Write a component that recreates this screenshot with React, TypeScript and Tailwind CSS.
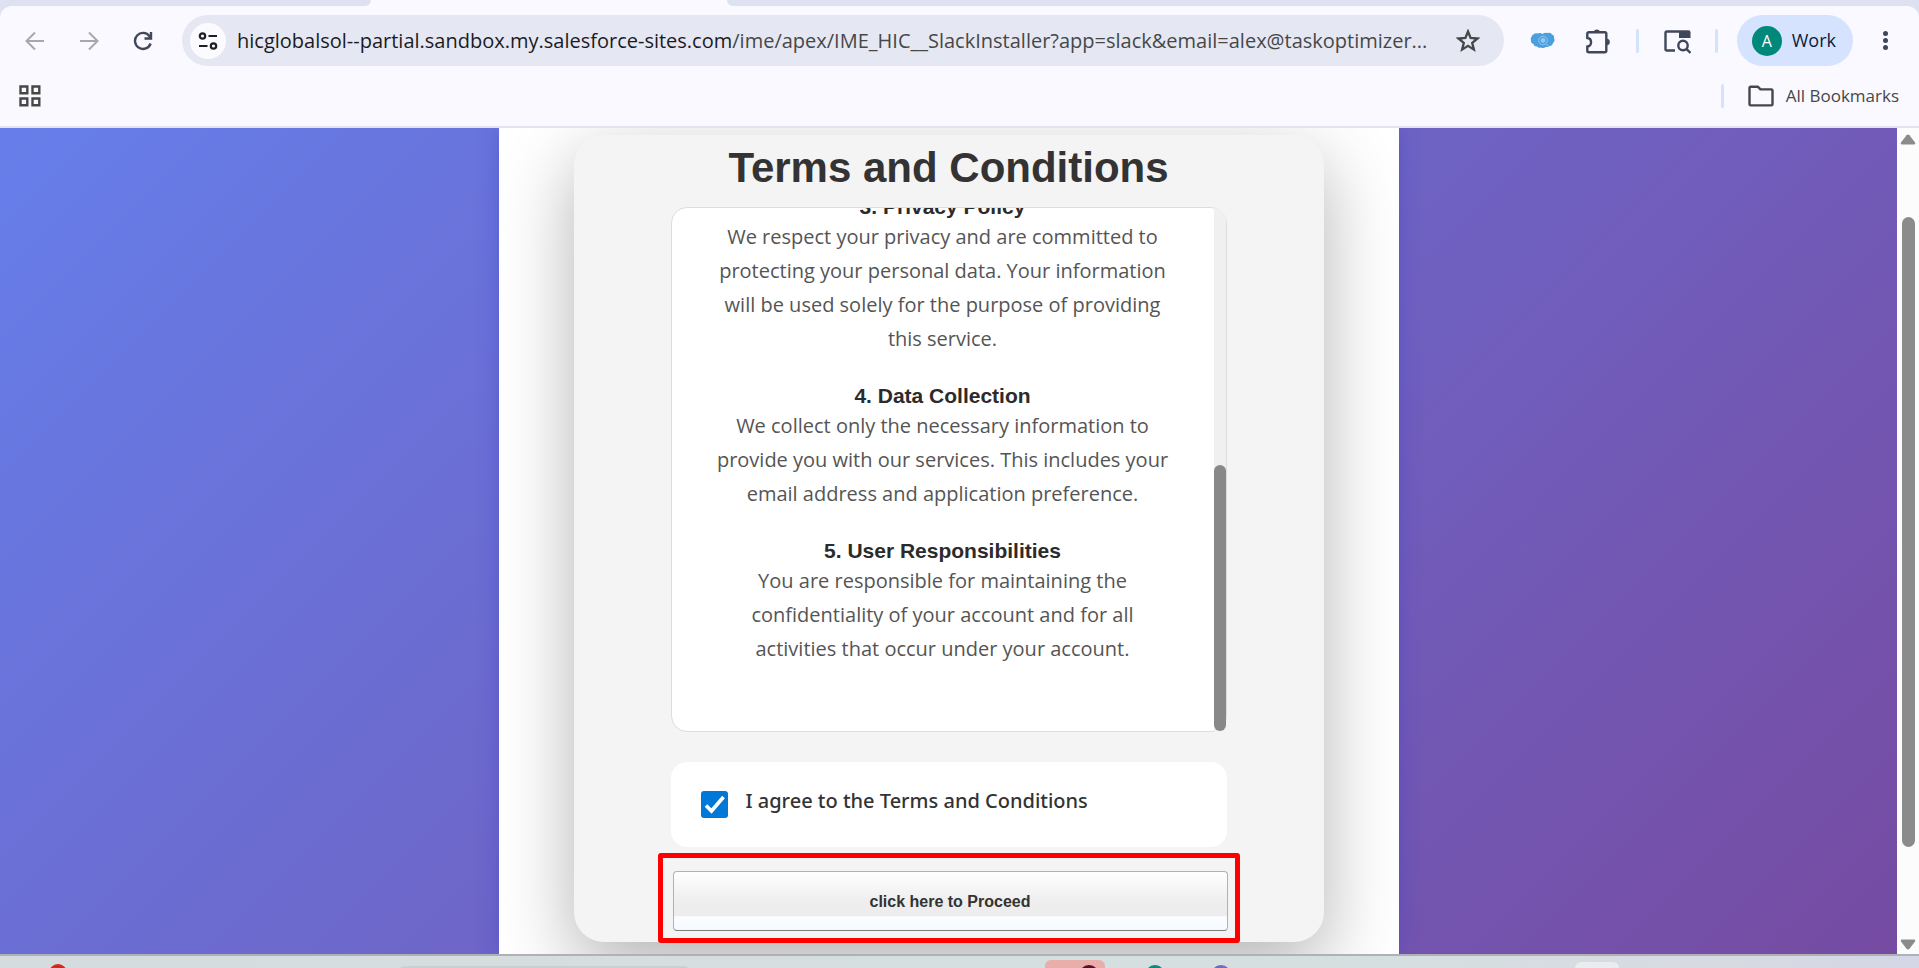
import React from "react";

const sections = [
  {
    title: "3. Privacy Policy",
    body: "We respect your privacy and are committed to protecting your personal data. Your information will be used solely for the purpose of providing this service.",
  },
  {
    title: "4. Data Collection",
    body: "We collect only the necessary information to provide you with our services. This includes your email address and application preference.",
  },
  {
    title: "5. User Responsibilities",
    body: "You are responsible for maintaining the confidentiality of your account and for all activities that occur under your account.",
  },
];

const stroke = { fill: "none", stroke: "currentColor", strokeWidth: 2 } as const;

function BackIcon() {
  return (
    <svg width="20" height="20" viewBox="0 0 20 20" {...stroke}>
      <path d="M19 10H2M10 1.5 1.5 10 10 18.5" />
    </svg>
  );
}

function ForwardIcon() {
  return (
    <svg width="20" height="20" viewBox="0 0 20 20" {...stroke}>
      <path d="M1 10h17M10 1.5l8.500 8.500-8.500 8.500" />
    </svg>
  );
}

function ReloadIcon() {
  return (
    <svg width="20" height="20" viewBox="0 0 20 20" {...stroke} strokeWidth={2.4}>
      <path d="M17.600 12.500A8 8 0 1 1 16.500 5.200L18 7" />
      <path d="M18 1v6.500h-6.500" />
    </svg>
  );
}

function TuneIcon() {
  return (
    <svg width="20" height="20" viewBox="0 0 20 20" {...stroke} strokeWidth={2.200}>
      <circle cx="4.500" cy="5" r="2.700" />
      <path d="M10.500 5H19M1 15h8.500" />
      <circle cx="15.500" cy="15" r="2.700" />
    </svg>
  );
}

function StarIcon() {
  return (
    <svg width="24" height="24" viewBox="0 0 24 24" {...stroke} strokeWidth={2.300}>
      <path d="M12 2.500l2.600 6.500 6.900.5-5.300 4.400 1.700 6.700-5.900-3.700L6.100 20.600l1.700-6.700-5.300-4.400L9.400 9z" />
    </svg>
  );
}

function CloudIcon() {
  return (
    <svg width="26" height="20" viewBox="0 0 26 20">
      <path
        fill="#4a9fdf"
        d="M3.500 3.500Q5 1.500 8 2.500 10 1.200 12.500 3 15 1 17.500 2 21 .8 22 3.500q2.500.8 2 3.500 1.500 3-1 5-.5 3-3.500 3-1.500 1.500-3.500.8-2.500 2.200-5 .7-2.500.8-4-1-3 .3-3.500-2.500Q.5 12 1 9q-1-2 .5-3 0-2 2-2.500z"
      />
      <circle cx="13" cy="9.500" r="4.300" fill="none" stroke="#8fc9f2" />
      <circle cx="13" cy="9.500" r="2.400" fill="#8fc9f2" />
      <path d="M16 12.500l2.500 2.500" stroke="#8fc9f2" />
    </svg>
  );
}

function PuzzleIcon() {
  return (
    <svg width="28" height="28" viewBox="0 0 28 28" {...stroke} strokeWidth={2.400}>
      <path d="M4.800 5.200h16a1.500 1.500 0 0 1 1.500 1.500v17a1.500 1.500 0 0 1-1.500 1.500h-16a1.500 1.500 0 0 1-1.500-1.500V19.500c5-.5 5-8 0-8.500V6.700A1.500 1.500 0 0 1 4.800 5.200z" />
      <path fill="currentColor" stroke="none" d="M9.700 5a3.300 3.300 0 0 1 6.400 0zM22.500 11.700a3.300 3.300 0 0 1 0 6.600z" />
    </svg>
  );
}

function TabSearchIcon() {
  return (
    <svg width="28" height="28" viewBox="0 0 28 28" {...stroke} strokeWidth={2.400}>
      <path d="M12 23.500H4a1.500 1.500 0 0 1-1.500-1.500V6A1.500 1.500 0 0 1 4 4.500h12" />
      <path fill="currentColor" stroke="none" d="M16 3.300h9.500a2 2 0 0 1 2 2V11H16z" />
      <circle cx="20" cy="18.500" r="4.700" />
      <path d="M23.300 21.800l4.200 4.200" />
    </svg>
  );
}

function FolderIcon() {
  return (
    <svg width="26" height="22" viewBox="0 0 26 22" {...stroke} strokeWidth={2.400} strokeLinejoin="round">
      <path d="M2.500 1.800h7.500l2.500 2.600h11A1.200 1.200 0 0 1 24.500 5.600v13.600a1.200 1.200 0 0 1-1.200 1.200H2.700a1.200 1.200 0 0 1-1.200-1.200V2.800a1 1 0 0 1 1-1z" />
    </svg>
  );
}

function AppsIcon() {
  return (
    <svg width="22" height="22" viewBox="0 0 22 22" {...stroke} strokeWidth={2.400}>
      <path d="M1.500 1.500h6.800v6.800H1.500zM13.500 1.500h6.800v6.800h-6.800zM1.500 13.500h6.800v6.800H1.500zM13.500 13.500h6.800v6.800h-6.800z" />
    </svg>
  );
}

function Divider() {
  return <span className="h-6 w-[3px] shrink-0 rounded bg-[#d3e3fd]" />;
}

function BrowserChrome() {
  return (
    <header className="shrink-0 bg-[#dee1ef]">
      <div className="flex h-[6px] w-full bg-[#faf9ff]">
        <div className="w-[371px] rounded-br-md bg-[#dee1ef]" />
        <div className="w-[356px]" />
        <div className="flex-1 rounded-bl-md bg-[#dee1ef]" />
      </div>
      <div className="rounded-t-xl border-b-2 border-[#e3e2ee] bg-[#faf9ff]">
        <div className="flex h-[69px] items-center pr-[31px] pl-[25px]">
          <nav aria-label="History" className="flex items-center gap-[34px]">
            <button aria-label="Back" className="text-[#a7a8ae]"><BackIcon /></button>
            <button aria-label="Forward" className="text-[#a7a8ae]"><ForwardIcon /></button>
            <button aria-label="Reload" className="text-[#3f4759]"><ReloadIcon /></button>
          </nav>
          <div className="ml-[29px] flex h-[51px] min-w-0 flex-1 items-center rounded-full bg-[#e5e8f3] pr-6 pl-2">
            <button aria-label="Site information" className="flex size-9 shrink-0 items-center justify-center rounded-full bg-[#fbfbff] text-[#1f1f1f]">
              <TuneIcon />
            </button>
            <div className="ml-[11px] min-w-0 flex-1 overflow-hidden text-[20px] whitespace-nowrap text-[#474747]">
              <span className="text-[#1b1b1f]">hicglobalsol--partial.sandbox.my.salesforce-sites.com</span>
              /ime/apex/IME_HIC__SlackInstaller?app=slack&amp;email=alex@taskoptimizer...
            </div>
            <button aria-label="Bookmark this page" className="ml-3 text-[#474747]"><StarIcon /></button>
          </div>
          <div className="ml-[26px] flex shrink-0 items-center">
            <button aria-label="Salesforce extension"><CloudIcon /></button>
            <button aria-label="Extensions" className="ml-7 text-[#3f4759]"><PuzzleIcon /></button>
            <span className="ml-6 flex"><Divider /></span>
            <button aria-label="Search tabs" className="ml-6 text-[#3f4759]"><TabSearchIcon /></button>
            <span className="ml-6 flex"><Divider /></span>
            <button className="ml-[19px] flex h-[51px] items-center gap-[10px] rounded-full bg-[#d6e3ff] pr-[17px] pl-[15px] text-[18px] text-[#0b1d3a]">
              <span className="flex size-[30px] items-center justify-center rounded-full bg-[#00897b] text-[16px] text-white">A</span>
              Work
            </button>
            <button aria-label="Menu" className="ml-[30px] flex flex-col gap-[2px]">
              <span className="size-[5px] rounded-full bg-[#3f4759]" />
              <span className="size-[5px] rounded-full bg-[#3f4759]" />
              <span className="size-[5px] rounded-full bg-[#3f4759]" />
            </button>
          </div>
        </div>
        <div className="flex h-[51px] items-start justify-between pr-5 pl-[19px]">
          <button aria-label="Apps" className="mt-[10px] text-[#474747]"><AppsIcon /></button>
          <div className="mt-[9px] flex items-center">
            <Divider />
            <button className="ml-6 flex items-center gap-3 text-[17px] leading-6 text-[#474747]">
              <FolderIcon />
              All Bookmarks
            </button>
          </div>
        </div>
      </div>
    </header>
  );
}

function TermsCard() {
  return (
    <main className="mx-auto mt-[7px] w-[750px] rounded-[30px] bg-[#f4f4f4] pt-2 pb-[11px] shadow-[0_25px_75px_rgba(0,0,0,0.3)]">
      <h1 className="text-center font-['Liberation_Sans',sans-serif] text-[42px] leading-[50px] font-bold text-[#333]">
        Terms and Conditions
      </h1>
      <div className="mx-auto mt-[14px] w-[556px]">
        <div className="flex h-[525px] rounded-2xl border border-[#ddd] bg-white">
          <div className="flex flex-1 flex-col justify-end gap-[27px] overflow-hidden rounded-l-2xl px-10 pb-[65px] text-center">
            {sections.map((s) => (
              <section key={s.title} className="shrink-0">
                <h2 className="font-['Liberation_Sans',sans-serif] text-[21px] leading-[26px] font-bold text-[#2b2b2b]">{s.title}</h2>
                <p className="text-[20px] leading-[34px] text-[#555]">{s.body}</p>
              </section>
            ))}
          </div>
          <div className="flex w-3 flex-col justify-end rounded-tr-xl rounded-br-md bg-[#f0f0f0]">
            <div className="h-[266px] rounded-md bg-[#888]" />
          </div>
        </div>
        <label className="mt-[30px] flex h-[85px] items-start gap-[18px] rounded-2xl bg-white px-[30px] pt-[22px] font-['Noto_Sans',sans-serif] text-[20px] leading-[34px] font-medium text-[#333]">
          <span className="mt-[7px] grid size-[27px] shrink-0">
            <input type="checkbox" defaultChecked className="col-start-1 row-start-1 size-[27px] appearance-none rounded-[3px] bg-[#0078d7]" />
            <svg viewBox="0 0 27 27" className="pointer-events-none col-start-1 row-start-1 size-[27px]" fill="none" stroke="#fff" strokeWidth="3.600">
              <path d="M5 14.500l5.500 5.500L22.500 6" />
            </svg>
          </span>
          I agree to the Terms and Conditions
        </label>
      </div>
      <div className="mx-auto mt-[6px] -mb-3 w-[582px] rounded-[3px] border-[5px] border-[#f00] pt-[13px] pr-[7px] pb-[7px] pl-[10px]">
        <button className="h-[60px] w-full rounded border border-[#b0b1b3] border-b-[#7f7f7f] bg-[linear-gradient(#fff_0%,#eee_50%,#ededed_76%,#fcfdff_77%,#f3faff_100%)] pt-px font-['Liberation_Sans',sans-serif] text-[16px] font-bold text-[#333]">
          click here to Proceed
        </button>
      </div>
    </main>
  );
}

function PageScrollbar() {
  return (
    <div className="flex w-[22px] shrink-0 flex-col items-center bg-[#fcfcfc] pt-[6px] pb-[4px]">
      <svg width="16" height="11" viewBox="0 0 16 11" fill="#8b8b8b"><path d="M6.500 1.300q1.500-1.600 3 0L15 8.500q.8 2-1 2H2q-1.800 0-1-2z" /></svg>
      <div className="flex w-[13px] flex-1 flex-col">
        <div className="grow-[72]" />
        <div className="grow-[628] rounded-full bg-[#8b8b8b]" />
        <div className="grow-[92]" />
      </div>
      <svg width="16" height="11" viewBox="0 0 16 11" fill="#8b8b8b"><path d="M6.500 9.700q1.500 1.600 3 0L15 2.500q.8-2-1-2H2q-1.800 0-1 2z" /></svg>
    </div>
  );
}

function Taskbar() {
  return (
    <footer className="flex h-[14px] shrink-0 items-start overflow-hidden border-t-2 border-[#aeb2b5] bg-[linear-gradient(90deg,#d5dcdf_0%,#d5dfe0_70%,#d8dae2_90%,#d5d6e6_100%)]">
      <div className="mt-2 ml-[49px] size-[18px] shrink-0 rounded-full bg-[#cf2a1c]" />
      <div className="mt-[10px] ml-[327px] h-6 w-[300px] shrink-0 rounded-full bg-[#c8d0d2]" />
      <div className="mt-1 ml-[351px] flex h-9 w-[60px] shrink-0 justify-end rounded-md bg-[#e9aeaa] pt-[5px] pr-[6px]">
        <div className="size-5 rounded-full bg-[#5c0f2b]" />
      </div>
      <div className="mt-[9px] ml-10 size-5 shrink-0 rounded-full bg-[#0b8a78]" />
      <div className="mt-[9px] ml-[46px] size-5 shrink-0 rounded-full bg-[linear-gradient(90deg,#4a76b8,#9a5cd0)]" />
      <div className="mt-[6px] ml-[344px] h-9 w-11 shrink-0 rounded-md bg-[#e9edef]" />
    </footer>
  );
}

export default function App() {
  return (
    <div className="flex h-screen flex-col overflow-hidden font-['Open_Sans','Noto_Sans',sans-serif]">
      <BrowserChrome />
      <div className="flex min-h-0 flex-1">
        <div className="min-w-0 flex-1 overflow-hidden bg-[linear-gradient(135deg,#667eea_0%,#764ba2_100%)]">
          <div className="mx-auto h-full w-[900px] max-w-full bg-white shadow-[0_0_20px_rgba(60,60,200,0.4)]">
            <div className="flow-root h-full overflow-hidden">
              <TermsCard />
            </div>
          </div>
        </div>
        <PageScrollbar />
      </div>
      <Taskbar />
    </div>
  );
}
